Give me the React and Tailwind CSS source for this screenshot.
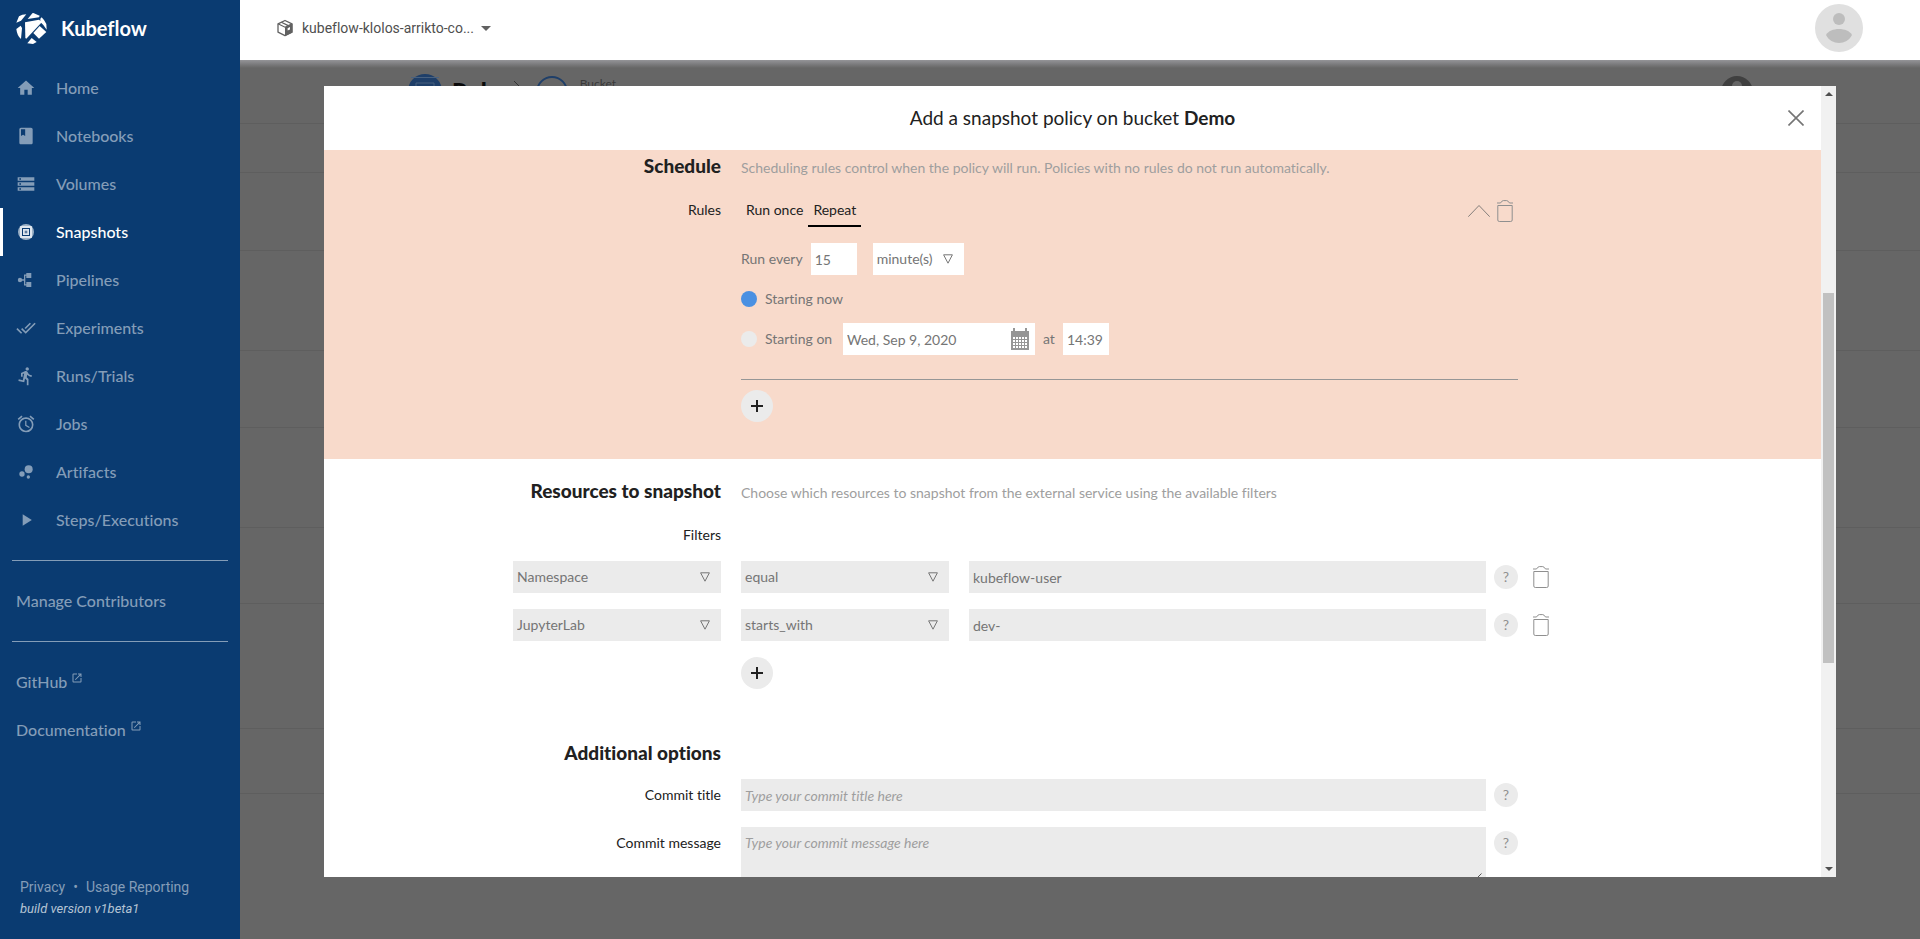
import React from "react";
import {
  MdHome, MdClass, MdStorage, MdDoneAll, MdDirectionsRun, MdAccessAlarm,
  MdBubbleChart, MdPlayArrow, MdLaunch, MdArrowDropDown,
} from "react-icons/md";

function KubeflowLogo() {
  return (
    <svg viewBox="0 0 93 93" className="size-[31px]" fill="#fff" aria-hidden="true">
      <path d="M1 29 9 10Q18 4 31 4L15 23Z" />
      <path d="M35 18 49 1 52 0 71 8 69 13Z" />
      <path d="M73 17 77 13Q86 22 91 33L92 50Q84 36 73 27Z" />
      <path d="M1 48 14 38 18 45 15 78Q3 68 1 48Z" />
      <path d="M27 28 69 20 78 27 31 77 28 75Z" />
      <path d="M71 39 91 57 69 77 52 60Z" />
      <path d="M34 91 47 75 62 87 51 93Z" />
    </svg>
  );
}

function SnapshotIcon() {
  return (
    <svg viewBox="0 0 20 20" className="size-5" aria-hidden="true">
      <circle cx="10" cy="10" r="8" fill="#9cb1c6" />
      <rect x="4" y="4" width="12" height="12" rx="1" fill="#dfe6ee" />
      <rect x="6.500" y="6.500" width="7" height="7" fill="none" stroke="#0a3b71" />
      <rect x="8.700" y="8.700" width="2.600" height="2.600" fill="#5d7c9f" />
    </svg>
  );
}

function PipelineIcon() {
  return (
    <svg viewBox="0 0 20 20" className="size-5" fill="currentColor" aria-hidden="true">
      <circle cx="4" cy="10" r="2.2" />
      <path d="M4 9.3h4V4.6h3v1.2H9.3v8.4H11v1.2H8v-4.7H4z" />
      <rect x="10.3" y="3" width="5" height="5" />
      <rect x="10.3" y="12" width="5" height="5" />
    </svg>
  );
}

function CubeIcon() {
  return (
    <svg viewBox="0 0 18 18" className="size-[18px]" aria-hidden="true">
      <path d="M9 1.5 16 4.8v8.4L9 16.6 2 13.2V4.8z" fill="#fff" stroke="#616161" strokeWidth="1.3" strokeLinejoin="round" />
      <path d="M9 8.3 16.4 4.8v8.6L9 17z" fill="#616161" />
      <path d="M2 4.8 9 8.2 16 4.8M5.3 3.2l7 3.4" fill="none" stroke="#616161" strokeWidth="1.2" />
      <path d="M11.6 9.2 14 8v2.4l-2.4 1.2z" fill="#fff" />
    </svg>
  );
}

function TrashIcon() {
  return (
    <svg viewBox="0 0 16 22" className="h-[22px] w-4" fill="none" stroke="#8f8f8f" aria-hidden="true">
      <path d="M0 3h3.500Q4.800.7 6.300.6h3.400Q11.200.7 12.500 3H16" />
      <path d="M.8 5.500h14.400V20q0 1.500-1.500 1.500H2.300Q.8 21.500.8 20z" />
    </svg>
  );
}

function CalendarIcon() {
  const rows = [9, 12, 15, 18];
  const cols = [2, 5, 8, 11, 14];
  return (
    <svg viewBox="0 0 18 22" className="h-[22px] w-[18px]" aria-hidden="true">
      <path d="M0 3h2V0h2v3h10V0h2v3h2v19H0z" fill="#969696" />
      {rows.map((y) => cols.map((x) => <rect key={`${x}-${y}`} x={x} y={y} width="2" height="2" fill="#fff" />))}
    </svg>
  );
}

function Triangle() {
  return (
    <svg viewBox="0 0 10 10" className="pointer-events-none col-start-1 row-start-1 mr-[11px] size-2.5 justify-self-end" fill="none" stroke="#757575" aria-hidden="true">
      <path d="M.6.8h8.800L5 9.200z" />
    </svg>
  );
}

const nav = [
  ["Home", MdHome], ["Notebooks", MdClass], ["Volumes", MdStorage], ["Snapshots", SnapshotIcon],
  ["Pipelines", PipelineIcon], ["Experiments", MdDoneAll], ["Runs/Trials", MdDirectionsRun],
  ["Jobs", MdAccessAlarm], ["Artifacts", MdBubbleChart], ["Steps/Executions", MdPlayArrow],
];

function Sidebar() {
  return (
    <aside className="flex w-60 shrink-0 flex-col bg-[#0a3b71] font-['Lato',sans-serif] text-base font-medium text-[#849db8]">
      <div className="flex h-14 items-center gap-3.5 pl-4 text-xl font-bold text-white">
        <KubeflowLogo />
        Kubeflow
      </div>
      <nav className="flex flex-col pt-2">
        {nav.map(([label, Icon]) => {
          const active = label === "Snapshots";
          return (
            <a key={label} href="#" aria-current={active ? "page" : undefined}
              className={active
                ? "flex h-12 items-center gap-5 border-l-3 border-white pl-[13px] text-white"
                : "flex h-12 items-center gap-5 border-l-3 border-transparent pl-[13px]"}>
              <Icon className="size-5" />
              {label}
            </a>
          );
        })}
        <hr className="mx-3 my-4 border-[#849db8]" />
        <a href="#" className="flex h-12 items-center pl-4">Manage Contributors</a>
        <hr className="mx-3 my-4 border-[#849db8]" />
        {["GitHub", "Documentation"].map((label) => (
          <a key={label} href="#" className="flex h-12 items-center gap-1 pl-4">
            {label}
            <MdLaunch className="mb-2 size-3" />
          </a>
        ))}
      </nav>
      <footer className="mt-auto px-5 pb-5 font-['Roboto',sans-serif] font-normal">
        <div className="flex gap-2 text-sm leading-6">
          <a href="#">Privacy</a><span>•</span><a href="#">Usage Reporting</a>
        </div>
        <div className="text-[13px] leading-5 text-[#b5c4d4] italic">build version v1beta1</div>
      </footer>
    </aside>
  );
}

function TopBar() {
  return (
    <header className="flex h-[60px] shrink-0 items-center justify-between bg-white pr-[57px] pl-9 font-['Roboto',sans-serif]">
      <button type="button" className="flex items-center gap-2 pb-1 text-sm text-[#4f4f4f]">
        <CubeIcon />
        kubeflow-klolos-arrikto-co...
        <MdArrowDropDown className="-ml-2 size-6 text-[#616161]" />
      </button>
      <svg viewBox="0 0 48 48" className="mb-1 size-12" role="img" aria-label="User account">
        <circle cx="24" cy="24" r="24" fill="#e0e0e0" />
        <circle cx="24" cy="15" r="6" fill="#bdbdbd" />
        <path d="M11 31C15 23 33 23 37 31C32 41.500 16 41.500 11 31Z" fill="#bdbdbd" />
      </svg>
    </header>
  );
}

function Backdrop() {
  return (
    <div className="flex h-full flex-col bg-[#666]">
      <div className="flex h-16 items-start border-b border-[#5e5e5e] pr-[167px] pl-[168px] text-sm text-[#3a3a3a]">
        <svg viewBox="0 0 34 34" className="mt-3.5 size-[34px]" aria-hidden="true">
          <circle cx="17" cy="17" r="17" fill="#1f3f69" />
          <path d="M3 3.500h28M8 9h18v14H8z" fill="none" stroke="#49617f" />
        </svg>
        <span className="mt-4 ml-2.5 text-2xl leading-8 font-black text-[#0a0a0a]">Rok</span>
        <svg viewBox="0 0 10 20" className="mt-[21px] ml-5 h-5 w-2.5" fill="none" stroke="#333" aria-hidden="true">
          <path d="m0 0 10 10L0 20" />
        </svg>
        <svg viewBox="0 0 32 32" className="mt-4 ml-3 size-8" fill="none" stroke="#1f3f69" strokeWidth="2" aria-hidden="true">
          <circle cx="16" cy="16" r="15" />
        </svg>
        <span className="mt-3.5 ml-3 text-xs leading-5">Bucket</span>
        <svg viewBox="0 0 32 32" className="mt-4 ml-auto size-8" aria-hidden="true">
          <circle cx="16" cy="16" r="16" fill="#404040" />
          <circle cx="16" cy="10" r="5" fill="#666" />
        </svg>
      </div>
      <div className="h-[49px] border-b border-[#5e5e5e]" />
      <div className="h-[78px] border-b border-[#5e5e5e]" />
      <div className="h-[100px] border-b border-[#5e5e5e]" />
      <div className="h-[77px] border-b border-[#5e5e5e]" />
      <div className="h-[100px] border-b border-[#5e5e5e]" />
      <div className="h-[76px] border-b border-[#5e5e5e]" />
      <div className="h-[125px] border-b border-[#5e5e5e]" />
      <div className="h-[65px] border-b border-[#5e5e5e]" />
    </div>
  );
}

function Row({ label, children, extra, className = "" }) {
  return (
    <div className={`grid grid-cols-[minmax(0,417fr)_minmax(0,777fr)_minmax(0,303fr)] ${className}`}>
      <div className="pr-5 text-right leading-8 text-[#212121]">{label}</div>
      <div className="min-w-0">{children}</div>
      <div className="flex h-8 items-center pl-[15px]">{extra}</div>
    </div>
  );
}

function Heading({ children }) {
  return <h2 className="text-[19px] leading-8 font-black">{children}</h2>;
}

function SelectBox({ label, value, className, tone }) {
  return (
    <div className={`grid items-center ${className}`}>
      <select aria-label={label} defaultValue={value}
        className={`col-start-1 row-start-1 h-8 w-full appearance-none px-1 text-[#757575] ${tone}`}>
        <option>{value}</option>
      </select>
      <Triangle />
    </div>
  );
}

function Help({ topic }) {
  return (
    <button type="button" aria-label={`Help on ${topic}`} className="size-6 shrink-0 rounded-full bg-[#ebebeb] text-sm leading-6 text-[#8f8f8f]">?</button>
  );
}

function Delete({ what }) {
  return <button type="button" aria-label={`Delete ${what}`}><TrashIcon /></button>;
}

function AddButton({ what }) {
  return (
    <button type="button" aria-label={`Add ${what}`} className="grid size-8 place-items-center rounded-full bg-[#ebebeb]">
      <svg viewBox="0 0 12 12" className="size-3" stroke="#212121" strokeWidth="2" aria-hidden="true"><path d="M6 0v12M0 6h12" /></svg>
    </button>
  );
}

function Schedule() {
  return (
    <section className="h-[309px] shrink-0 bg-[#f8dacb]">
      <Row label={<Heading>Schedule</Heading>}>
        <p className="pt-0.5 leading-8 text-[#9e9e9e]">Scheduling rules control when the policy will run. Policies with no rules do not run automatically.</p>
      </Row>
      <Row label="Rules" className="mt-2.5">
        <div className="flex h-[33px] items-stretch text-[#212121]">
          <button type="button" className="border-b-2 border-transparent px-[5px]">Run once</button>
          <button type="button" className="border-b-2 border-black px-[5px]">Repeat</button>
          <div className="mr-[5px] ml-auto flex items-center gap-[7px]">
            <button type="button" aria-label="Collapse rule">
              <svg viewBox="0 0 22 12" className="h-3 w-[22px]" fill="none" stroke="#666" strokeWidth=".8" aria-hidden="true"><path d="M.3 11.700 11 .5l10.700 11.200" /></svg>
            </button>
            <Delete what="rule" />
          </div>
        </div>
        <div className="mt-4 flex items-center text-[#757575]">
          <label htmlFor="every" className="mr-2">Run every</label>
          <input id="every" defaultValue="15" className="mr-4 h-8 w-[46px] bg-white px-1" />
          <SelectBox label="Interval unit" value="minute(s)" tone="bg-white" className="w-[91px]" />
        </div>
        <label className="mt-3 flex h-6 items-center gap-2 text-[#757575]">
          <input type="radio" name="start" defaultChecked className="size-4 appearance-none rounded-full bg-[#ebebeb] checked:bg-[#4a90e2]" />
          Starting now
        </label>
        <div className="mt-3 flex items-center gap-2 text-[#757575]">
          <label className="flex w-[94px] items-center gap-2">
            <input type="radio" name="start" className="size-4 appearance-none rounded-full bg-[#ebebeb] checked:bg-[#4a90e2]" />
            Starting on
          </label>
          <div className="flex h-8 w-48 items-center bg-white pr-1.5">
            <input aria-label="Start date" defaultValue="Wed, Sep 9, 2020" className="h-8 min-w-0 flex-1 px-1" />
            <button type="button" aria-label="Open calendar"><CalendarIcon /></button>
          </div>
          <label htmlFor="time">at</label>
          <input id="time" defaultValue="14:39" className="h-8 w-[46px] bg-white px-1" />
        </div>
        <hr className="mt-6 mb-2.5 border-[#969696]" />
        <AddButton what="rule" />
      </Row>
    </section>
  );
}

const filters = [
  ["Namespace", "equal", "kubeflow-user"],
  ["JupyterLab", "starts_with", "dev-"],
];

function Resources() {
  return (
    <section className="pt-4">
      <Row label={<Heading>Resources to snapshot</Heading>}>
        <p className="pt-0.5 leading-8 text-[#9e9e9e]">Choose which resources to snapshot from the external service using the available filters</p>
      </Row>
      <Row label="Filters" className="mt-2.5" />
      <div className="mt-2.5 flex flex-col gap-4">
        {filters.map(([field, op, value]) => (
          <Row key={field} extra={<Delete what={`${field} filter`} />}
            label={<SelectBox label="Field" value={field} tone="bg-[#ebebeb]" className="ml-auto w-52" />}>
            <div className="flex items-center gap-2">
              <SelectBox label="Operator" value={op} tone="bg-[#ebebeb]" className="mr-3 w-52 shrink-0" />
              <input aria-label="Value" defaultValue={value} className="h-8 min-w-0 flex-1 bg-[#ebebeb] px-1 text-[#757575]" />
              <Help topic={field} />
            </div>
          </Row>
        ))}
        <Row label=""><AddButton what="filter" /></Row>
      </div>
    </section>
  );
}

function Options() {
  return (
    <section className="pt-12">
      <Row label={<Heading>Additional options</Heading>} />
      <Row label={<label htmlFor="title">Commit title</label>} className="mt-2.5">
        <div className="flex items-center gap-2">
          <input id="title" placeholder="Type your commit title here" className="h-8 min-w-0 flex-1 bg-[#ebebeb] px-1 placeholder:text-[#9e9e9e] placeholder:italic" />
          <Help topic="commit title" />
        </div>
      </Row>
      <Row label={<label htmlFor="message">Commit message</label>} className="mt-4">
        <div className="flex items-start gap-2">
          <div className="relative flex h-[60px] min-w-0 flex-1">
            <textarea id="message" placeholder="Type your commit message here" className="min-w-0 flex-1 resize-none bg-[#ebebeb] px-1 py-1.5 leading-5 placeholder:text-[#9e9e9e] placeholder:italic" />
            <svg viewBox="0 0 12 12" className="absolute right-1 bottom-0.5 size-3" stroke="#555" aria-hidden="true"><path d="M11.500.5.5 11.500M11.500 6.500l-5 5" /></svg>
          </div>
          <div className="pt-1"><Help topic="commit message" /></div>
        </div>
      </Row>
    </section>
  );
}

function ScrollBar() {
  return (
    <div className="flex w-[15px] shrink-0 flex-col items-center bg-[#f1f1f1] py-1.5" aria-hidden="true">
      <svg viewBox="0 0 8 4" className="h-1 w-2"><path d="M0 4 4 0l4 4z" fill="#505050" /></svg>
      <div className="flex min-h-0 w-[11px] flex-1 flex-col py-1.5">
        <div className="flex-[191]" />
        <div className="flex-[370] bg-[#c1c1c1]" />
        <div className="flex-[198]" />
      </div>
      <svg viewBox="0 0 8 4" className="h-1 w-2"><path d="M0 0h8L4 4z" fill="#505050" /></svg>
    </div>
  );
}

function Dialog() {
  return (
    <div role="dialog" aria-labelledby="dialog-title" className="flex h-full bg-white">
      <div className="flex min-w-0 flex-1 flex-col">
        <div className="grid h-16 shrink-0 grid-cols-[1fr_auto_1fr] items-center px-[17px]">
          <h1 id="dialog-title" className="col-start-2 text-[19px] leading-7 text-[#212121]">
            Add a snapshot policy on bucket <strong>Demo</strong>
          </h1>
          <button type="button" aria-label="Close" className="justify-self-end">
            <svg viewBox="0 0 16 16" className="size-4" stroke="#757575" strokeWidth="1.600" aria-hidden="true"><path d="m.5.5 15 15M15.500.5l-15 15" /></svg>
          </button>
        </div>
        <div className="min-h-0 flex-1 overflow-hidden text-sm">
          <Schedule />
          <Resources />
          <Options />
        </div>
      </div>
      <ScrollBar />
    </div>
  );
}

export default function App() {
  return (
    <div className="flex h-screen overflow-hidden [font-variant-ligatures:none]">
      <Sidebar />
      <div className="flex min-w-0 flex-1 flex-col">
        <TopBar />
        <main className="relative min-h-0 flex-1 overflow-hidden font-['Lato',sans-serif]">
          <Backdrop />
          <div className="absolute inset-x-0 top-0 h-2 bg-linear-to-b from-[#949498] to-[#666]" />
          <div className="absolute inset-0 px-[84px] pt-[26px] pb-[62px]">
            <Dialog />
          </div>
        </main>
      </div>
    </div>
  );
}
